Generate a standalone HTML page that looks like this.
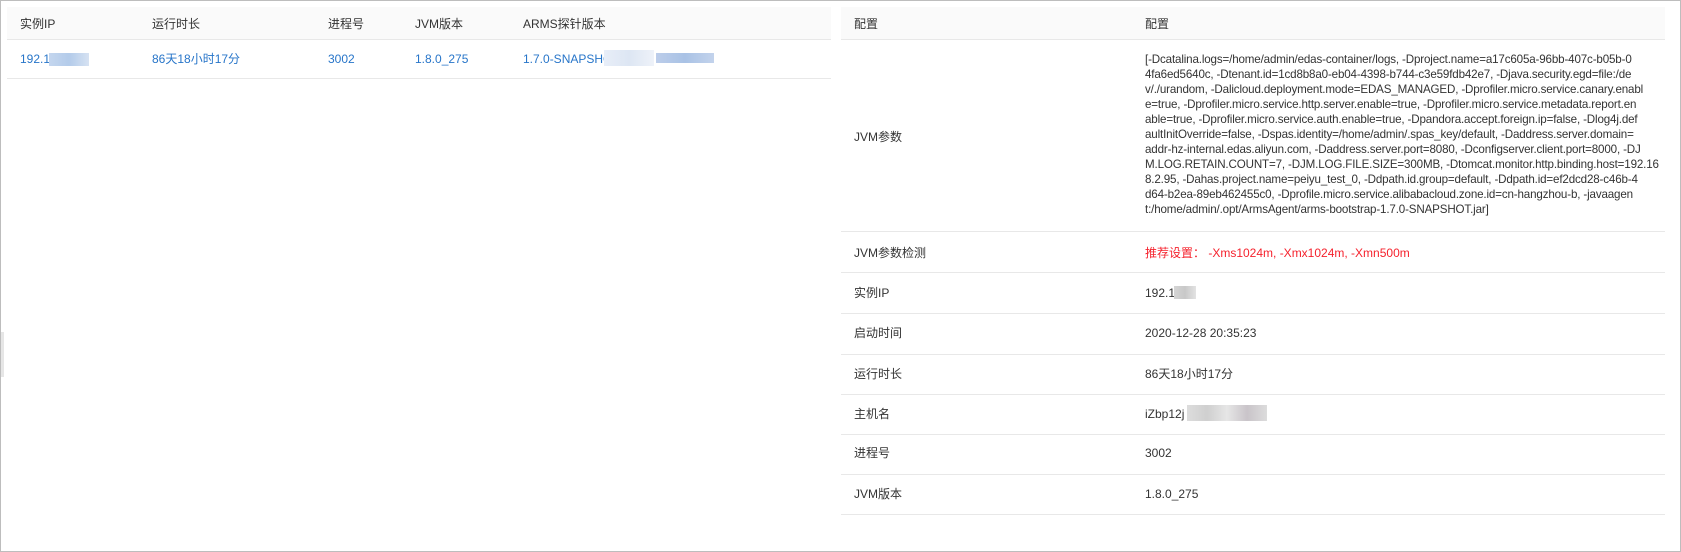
<!DOCTYPE html>
<html><head><meta charset="utf-8"><style>
*{margin:0;padding:0;box-sizing:border-box}
body{width:1681px;height:552px;background:#fff;position:relative;overflow:hidden;font-family:"Liberation Sans","Noto Sans CJK SC",sans-serif;font-size:12px;color:#333}
.frame{position:absolute;left:0;top:0;width:1681px;height:552px;border:1px solid #bdbdbd}
.a{position:absolute;white-space:nowrap;line-height:16px;height:16px;overflow:visible}
.hd{position:absolute;background:#fafafa;border-bottom:1px solid #e8e8e8}
.ln{position:absolute;height:1px;background:#e8e8e8}
.blue{color:#2775c9}
.blur{position:absolute;height:13px}
.jvm{position:absolute;left:1145px;top:52px;font-size:11.6px;line-height:15px;letter-spacing:-0.15px;white-space:nowrap;color:#333}
</style></head><body>
<div class="frame"></div>
<div style="position:absolute;left:1px;top:332px;width:3px;height:45px;background:#e6e6e6"></div>

<!-- left table -->
<div class="hd" style="left:7px;top:7px;width:824px;height:33px"></div>
<div class="a" style="left:20px;top:16px">实例IP</div>
<div class="a" style="left:152px;top:16px">运行时长</div>
<div class="a" style="left:328px;top:16px">进程号</div>
<div class="a" style="left:415px;top:16px">JVM版本</div>
<div class="a" style="left:523px;top:16px">ARMS探针版本</div>
<div class="a blue" style="left:20px;top:51px">192.1</div>
<div class="blur" style="left:49px;top:53px;width:40px;background:linear-gradient(90deg,#c4d6ee,#b3cbea,#d6e2f2)"></div>
<div class="a blue" style="left:152px;top:51px">86天18小时17分</div>
<div class="a blue" style="left:328px;top:51px">3002</div>
<div class="a blue" style="left:415px;top:51px">1.8.0_275</div>
<div class="a blue" style="left:523px;top:51px">1.7.0-SNAPSHC</div>
<div class="blur" style="left:604px;top:50px;width:50px;height:16px;background:linear-gradient(90deg,#e8eef8,#dde6f3,#eef2f9)"></div>
<div class="blur" style="left:656px;top:53px;width:58px;height:10px;background:linear-gradient(90deg,#bccdea,#a9c2e5,#c3d3ec)"></div>
<div class="ln" style="left:7px;top:78px;width:824px"></div>

<!-- right table -->
<div class="hd" style="left:841px;top:7px;width:824px;height:33px"></div>
<div class="a" style="left:854px;top:16px">配置</div>
<div class="a" style="left:1145px;top:16px">配置</div>
<div class="a" style="left:854px;top:129px">JVM参数</div>
<div class="jvm">[-Dcatalina.logs=/home/admin/edas-container/logs, -Dproject.name=a17c605a-96bb-407c-b05b-0<br>4fa6ed5640c, -Dtenant.id=1cd8b8a0-eb04-4398-b744-c3e59fdb42e7, -Djava.security.egd=file:/de<br>v/./urandom, -Dalicloud.deployment.mode=EDAS_MANAGED, -Dprofiler.micro.service.canary.enabl<br>e=true, -Dprofiler.micro.service.http.server.enable=true, -Dprofiler.micro.service.metadata.report.en<br>able=true, -Dprofiler.micro.service.auth.enable=true, -Dpandora.accept.foreign.ip=false, -Dlog4j.def<br>aultInitOverride=false, -Dspas.identity=/home/admin/.spas_key/default, -Daddress.server.domain=<br>addr-hz-internal.edas.aliyun.com, -Daddress.server.port=8080, -Dconfigserver.client.port=8000, -DJ<br>M.LOG.RETAIN.COUNT=7, -DJM.LOG.FILE.SIZE=300MB, -Dtomcat.monitor.http.binding.host=192.16<br>8.2.95, -Dahas.project.name=peiyu_test_0, -Ddpath.id.group=default, -Ddpath.id=ef2dcd28-c46b-4<br>d64-b2ea-89eb462455c0, -Dprofile.micro.service.alibabacloud.zone.id=cn-hangzhou-b, -javaagen<br>t:/home/admin/.opt/ArmsAgent/arms-bootstrap-1.7.0-SNAPSHOT.jar]</div>
<div class="ln" style="left:841px;top:231px;width:824px"></div>
<div class="a" style="left:854px;top:245px">JVM参数检测</div>
<div class="a" style="left:1145px;top:245px;color:#f5222d">推荐设置：&nbsp;-Xms1024m, -Xmx1024m, -Xmn500m</div>
<div class="ln" style="left:841px;top:272px;width:824px"></div>
<div class="a" style="left:854px;top:285px">实例IP</div>
<div class="a" style="left:1145px;top:285px">192.1</div>
<div class="blur" style="left:1174px;top:286px;width:22px;background:linear-gradient(90deg,#d5d5d5,#c8c8c8,#e3e3e3)"></div>
<div class="ln" style="left:841px;top:313px;width:824px"></div>
<div class="a" style="left:854px;top:325px">启动时间</div>
<div class="a" style="left:1145px;top:325px">2020-12-28 20:35:23</div>
<div class="ln" style="left:841px;top:354px;width:824px"></div>
<div class="a" style="left:854px;top:366px">运行时长</div>
<div class="a" style="left:1145px;top:366px">86天18小时17分</div>
<div class="ln" style="left:841px;top:394px;width:824px"></div>
<div class="a" style="left:854px;top:406px">主机名</div>
<div class="a" style="left:1145px;top:406px">iZbp12j</div>
<div class="blur" style="left:1187px;top:405px;width:80px;height:16px;background:linear-gradient(90deg,#ddd,#cfcfcf,#e6e6e6,#c9c4c9,#dcdcdc)"></div>
<div class="ln" style="left:841px;top:434px;width:824px"></div>
<div class="a" style="left:854px;top:445px">进程号</div>
<div class="a" style="left:1145px;top:445px">3002</div>
<div class="ln" style="left:841px;top:474px;width:824px"></div>
<div class="a" style="left:854px;top:486px">JVM版本</div>
<div class="a" style="left:1145px;top:486px">1.8.0_275</div>
<div class="ln" style="left:841px;top:514px;width:824px"></div>
</body></html>
